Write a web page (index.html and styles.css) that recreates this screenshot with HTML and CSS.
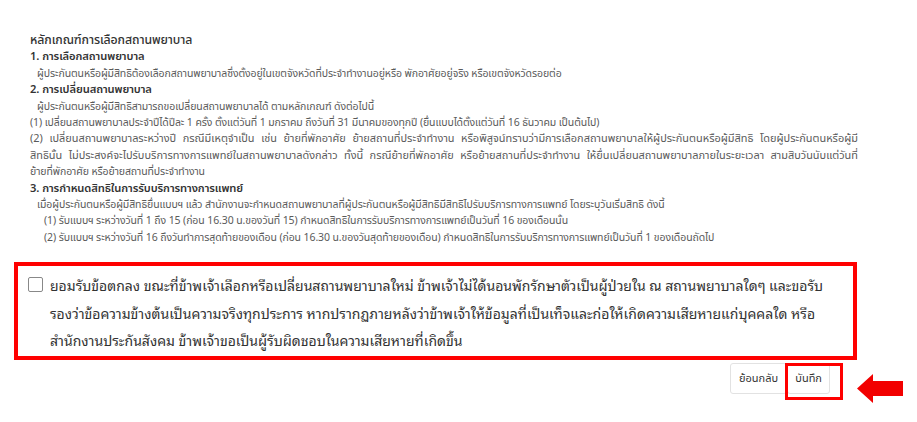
FILE: index.html
```html
<!DOCTYPE html>
<html lang="th">
<head>
<meta charset="utf-8">
<link rel="stylesheet" href="styles.css">
</head>
<body>
<div class="page">
  <div class="rules">
    <div class="title">หลักเกณฑ์การเลือกสถานพยาบาล</div>
    <div class="head">1. การเลือกสถานพยาบาล</div>
    <div class="ind">ผู้ประกันตนหรือผู้มีสิทธิต้องเลือกสถานพยาบาลซึ่งตั้งอยู่ในเขตจังหวัดที่ประจำทำงานอยู่หรือ พักอาศัยอยู่จริง หรือเขตจังหวัดรอยต่อ</div>
    <div class="head">2. การเปลี่ยนสถานพยาบาล</div>
    <div class="ind">ผู้ประกันตนหรือผู้มีสิทธิสามารถขอเปลี่ยนสถานพยาบาลได้ ตามหลักเกณฑ์ ดังต่อไปนี้</div>
    <div class="line">(1) เปลี่ยนสถานพยาบาลประจำปีได้ปีละ 1 ครั้ง ตั้งแต่วันที่ 1 มกราคม ถึงวันที่ 31 มีนาคมของทุกปี (ยื่นแบบได้ตั้งแต่วันที่ 16 ธันวาคม เป็นต้นไป)</div>
    <div class="line">
      <span class="jl">(2) เปลี่ยนสถานพยาบาลระหว่างปี กรณีมีเหตุจำเป็น เช่น ย้ายที่พักอาศัย ย้ายสถานที่ประจำทำงาน หรือพิสูจน์ทราบว่ามีการเลือกสถานพยาบาลให้ผู้ประกันตนหรือผู้มีสิทธิ โดยผู้ประกันตนหรือผู้มี</span>
      <span class="jl">สิทธินั้น ไม่ประสงค์จะไปรับบริการทางการแพทย์ในสถานพยาบาลดังกล่าว ทั้งนี้ กรณีย้ายที่พักอาศัย หรือย้ายสถานที่ประจำทำงาน ให้ยื่นเปลี่ยนสถานพยาบาลภายในระยะเวลา สามสิบวันนับแต่วันที่</span>
      <span class="bl">ย้ายที่พักอาศัย หรือย้ายสถานที่ประจำทำงาน</span>
    </div>
    <div class="head">3. การกำหนดสิทธิในการรับบริการทางการแพทย์</div>
    <div class="ind">เมื่อผู้ประกันตนหรือผู้มีสิทธิยื่นแบบฯ แล้ว สำนักงานจะกำหนดสถานพยาบาลที่ผู้ประกันตนหรือผู้มีสิทธิมีสิทธิไปรับบริการทางการแพทย์ โดยระบุวันเริ่มสิทธิ ดังนี้</div>
    <div class="ind2">(1) รับแบบฯ ระหว่างวันที่ 1 ถึง 15 (ก่อน 16.30 น.ของวันที่ 15) กำหนดสิทธิในการรับบริการทางการแพทย์เป็นวันที่ 16 ของเดือนนั้น</div>
    <div class="ind2">(2) รับแบบฯ ระหว่างวันที่ 16 ถึงวันทำการสุดท้ายของเดือน (ก่อน 16.30 น.ของวันสุดท้ายของเดือน) กำหนดสิทธิในการรับบริการทางการแพทย์เป็นวันที่ 1 ของเดือนถัดไป</div>
  </div>

  <label class="agree">
    <span class="box"></span>
    <span class="agree-text">ยอมรับข้อตกลง ขณะที่ข้าพเจ้าเลือกหรือเปลี่ยนสถานพยาบาลใหม่ ข้าพเจ้าไม่ได้นอนพักรักษาตัวเป็นผู้ป่วยใน ณ สถานพยาบาลใดๆ และขอรับ<br>รองว่าข้อความข้างต้นเป็นความจริงทุกประการ หากปรากฏภายหลังว่าข้าพเจ้าให้ข้อมูลที่เป็นเท็จและก่อให้เกิดความเสียหายแก่บุคคลใด หรือ<br>สำนักงานประกันสังคม ข้าพเจ้าขอเป็นผู้รับผิดชอบในความเสียหายที่เกิดขึ้น</span>
  </label>

  <div class="actions">
    <div class="btn-group">
      <button class="btn">ย้อนกลับ</button>
      <button class="btn btn-save">บันทึก</button>
      <span class="highlight"></span>
    </div>
    <svg class="arrow" width="46" height="29" viewBox="0 0 46 29">
      <polygon points="0,14.5 16,0 16,7 46,7 46,22 16,22 16,29" fill="#f20000"/>
    </svg>
  </div>
</div>
</body>
</html>
```

FILE: styles.css
```css
html, body {
  margin: 0;
  padding: 0;
  background: #ffffff;
}

.page {
  width: 917px;
  height: 422px;
  position: relative;
  overflow: hidden;
}

.rules {
  width: 828px;
  padding: 33px 0 0 30px;
  font-family: "Noto Sans Thai", "Noto Sans", sans-serif;
  font-size: 10.5px;
  line-height: 16.4px;
  color: #5a5a5a;
  white-space: nowrap;
  letter-spacing: -0.1px;
}

.title {
  font-size: 12.3px;
  font-weight: 500;
  color: #333333;
}

.head {
  font-size: 11.2px;
  font-weight: 600;
  color: #333333;
}

.jl {
  display: block;
  white-space: normal;
  font-size: 10.95px;
  letter-spacing: 0;
  text-align: justify;
  text-align-last: justify;
}

.bl {
  display: block;
}

.ind {
  padding-left: 7px;
}

.ind2 {
  padding-left: 14px;
}

.agree {
  display: flex;
  align-items: flex-start;
  margin: 16px 0 0 14px;
  width: 843px;
  height: 98px;
  box-sizing: border-box;
  border: 4px solid #ff0000;
  padding: 5px 0 0 10px;
  font-family: "Noto Sans Thai Looped", "Noto Sans Thai", "Noto Sans", sans-serif;
  font-size: 14px;
  line-height: 27.5px;
  color: #333333;
  white-space: nowrap;
}

.box {
  flex: none;
  width: 13px;
  height: 13px;
  border: 1px solid #888888;
  border-radius: 2px;
  margin-top: 6px;
  margin-right: 7px;
  background: #fff;
}

.actions {
  display: flex;
  align-items: flex-start;
  margin-top: 3px;
  padding-left: 730px;
}

.btn-group {
  position: relative;
  display: flex;
}

.btn {
  font-family: "Noto Sans Thai", "Noto Sans", sans-serif;
  font-size: 11px;
  color: #333333;
  background: #ffffff;
  border: 1px solid #e2e2e2;
  border-radius: 3px;
  height: 31px;
  padding: 0 8px;
  margin: 0;
}

.btn-save {
  width: 43px;
  padding: 0;
}

.highlight {
  position: absolute;
  left: 55px;
  top: 0;
  width: 58px;
  height: 37px;
  box-sizing: border-box;
  border: 3px solid #ff0000;
}

.arrow {
  margin-left: 27px;
  margin-top: 11px;
}
```
